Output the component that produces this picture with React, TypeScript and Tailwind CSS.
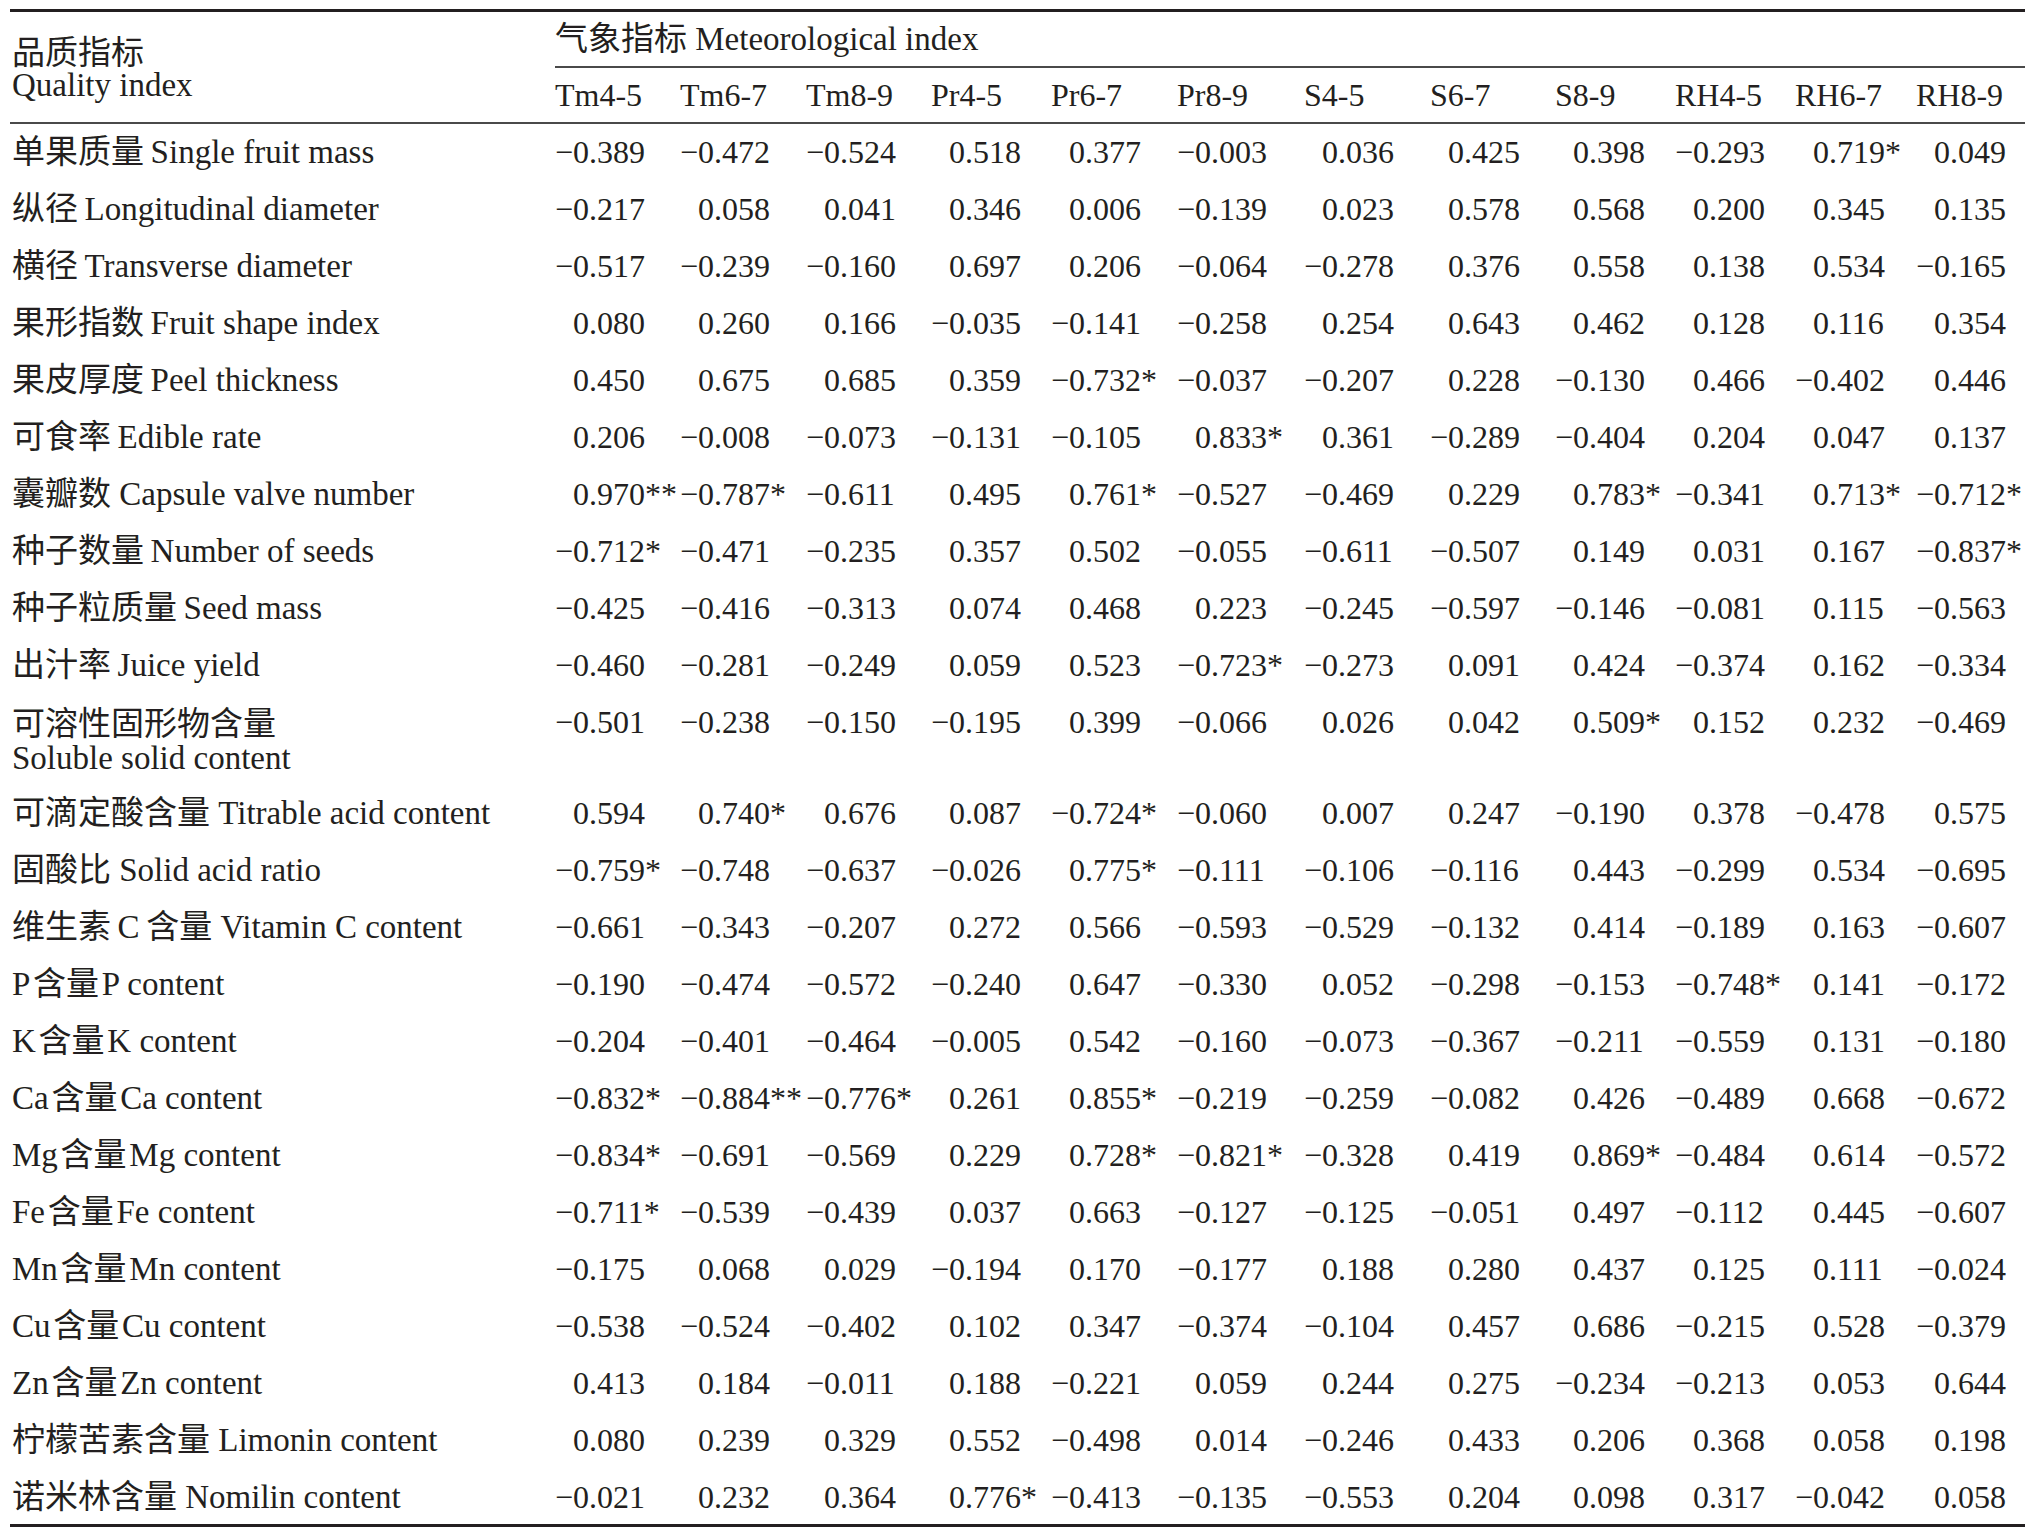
type Row = { label: string; label2?: string; values: string[] };

// Column widths follow the printed table: label column, then twelve index columns.
const cols = "grid-cols-[545px_125px_126px_125px_120px_126px_127px_126px_125px_120px_120px_121px_109px]";

const headers = [
  "Tm4-5", "Tm6-7", "Tm8-9", "Pr4-5", "Pr6-7", "Pr8-9",
  "S4-5", "S6-7", "S8-9", "RH4-5", "RH6-7", "RH8-9",
];

// \u2009 / \u200a = small gaps the typesetter leaves between Chinese and Latin text
const rows: Row[] = [
  { label: "单果质量\u2009Single fruit mass", values: ["-0.389", "-0.472", "-0.524", "0.518", "0.377", "-0.003", "0.036", "0.425", "0.398", "-0.293", "0.719*", "0.049"] },
  { label: "纵径\u2009Longitudinal diameter", values: ["-0.217", "0.058", "0.041", "0.346", "0.006", "-0.139", "0.023", "0.578", "0.568", "0.200", "0.345", "0.135"] },
  { label: "横径\u2009Transverse diameter", values: ["-0.517", "-0.239", "-0.160", "0.697", "0.206", "-0.064", "-0.278", "0.376", "0.558", "0.138", "0.534", "-0.165"] },
  { label: "果形指数\u2009Fruit shape index", values: ["0.080", "0.260", "0.166", "-0.035", "-0.141", "-0.258", "0.254", "0.643", "0.462", "0.128", "0.116", "0.354"] },
  { label: "果皮厚度\u2009Peel thickness", values: ["0.450", "0.675", "0.685", "0.359", "-0.732*", "-0.037", "-0.207", "0.228", "-0.130", "0.466", "-0.402", "0.446"] },
  { label: "可食率\u2009Edible rate", values: ["0.206", "-0.008", "-0.073", "-0.131", "-0.105", "0.833*", "0.361", "-0.289", "-0.404", "0.204", "0.047", "0.137"] },
  { label: "囊瓣数 Capsule valve number", values: ["0.970**", "-0.787*", "-0.611", "0.495", "0.761*", "-0.527", "-0.469", "0.229", "0.783*", "-0.341", "0.713*", "-0.712*"] },
  { label: "种子数量\u2009Number of seeds", values: ["-0.712*", "-0.471", "-0.235", "0.357", "0.502", "-0.055", "-0.611", "-0.507", "0.149", "0.031", "0.167", "-0.837*"] },
  { label: "种子粒质量\u2009Seed mass", values: ["-0.425", "-0.416", "-0.313", "0.074", "0.468", "0.223", "-0.245", "-0.597", "-0.146", "-0.081", "0.115", "-0.563"] },
  { label: "出汁率\u2009Juice yield", values: ["-0.460", "-0.281", "-0.249", "0.059", "0.523", "-0.723*", "-0.273", "0.091", "0.424", "-0.374", "0.162", "-0.334"] },
  { label: "可溶性固形物含量", label2: "Soluble solid content", values: ["-0.501", "-0.238", "-0.150", "-0.195", "0.399", "-0.066", "0.026", "0.042", "0.509*", "0.152", "0.232", "-0.469"] },
  { label: "可滴定酸含量 Titrable acid content", values: ["0.594", "0.740*", "0.676", "0.087", "-0.724*", "-0.060", "0.007", "0.247", "-0.190", "0.378", "-0.478", "0.575"] },
  { label: "固酸比 Solid acid ratio", values: ["-0.759*", "-0.748", "-0.637", "-0.026", "0.775*", "-0.111", "-0.106", "-0.116", "0.443", "-0.299", "0.534", "-0.695"] },
  { label: "维生素\u2009C\u2009含量 Vitamin C content", values: ["-0.661", "-0.343", "-0.207", "0.272", "0.566", "-0.593", "-0.529", "-0.132", "0.414", "-0.189", "0.163", "-0.607"] },
  { label: "P\u200a含量\u200aP content", values: ["-0.190", "-0.474", "-0.572", "-0.240", "0.647", "-0.330", "0.052", "-0.298", "-0.153", "-0.748*", "0.141", "-0.172"] },
  { label: "K\u200a含量\u200aK content", values: ["-0.204", "-0.401", "-0.464", "-0.005", "0.542", "-0.160", "-0.073", "-0.367", "-0.211", "-0.559", "0.131", "-0.180"] },
  { label: "Ca\u200a含量\u200aCa content", values: ["-0.832*", "-0.884**", "-0.776*", "0.261", "0.855*", "-0.219", "-0.259", "-0.082", "0.426", "-0.489", "0.668", "-0.672"] },
  { label: "Mg\u200a含量\u200aMg content", values: ["-0.834*", "-0.691", "-0.569", "0.229", "0.728*", "-0.821*", "-0.328", "0.419", "0.869*", "-0.484", "0.614", "-0.572"] },
  { label: "Fe\u200a含量\u200aFe content", values: ["-0.711*", "-0.539", "-0.439", "0.037", "0.663", "-0.127", "-0.125", "-0.051", "0.497", "-0.112", "0.445", "-0.607"] },
  { label: "Mn\u200a含量\u200aMn content", values: ["-0.175", "0.068", "0.029", "-0.194", "0.170", "-0.177", "0.188", "0.280", "0.437", "0.125", "0.111", "-0.024"] },
  { label: "Cu\u200a含量\u200aCu content", values: ["-0.538", "-0.524", "-0.402", "0.102", "0.347", "-0.374", "-0.104", "0.457", "0.686", "-0.215", "0.528", "-0.379"] },
  { label: "Zn\u200a含量\u200aZn content", values: ["0.413", "0.184", "-0.011", "0.188", "-0.221", "0.059", "0.244", "0.275", "-0.234", "-0.213", "0.053", "0.644"] },
  { label: "柠檬苦素含量 Limonin content", values: ["0.080", "0.239", "0.329", "0.552", "-0.498", "0.014", "-0.246", "0.433", "0.206", "0.368", "0.058", "0.198"] },
  { label: "诺米林含量 Nomilin content", values: ["-0.021", "0.232", "0.364", "0.776*", "-0.413", "-0.135", "-0.553", "0.204", "0.098", "0.317", "-0.042", "0.058"] },
];

// Minus sign hangs left of the digits, so positives get an invisible one.
function Num({ v }: { v: string }) {
  const neg = v.startsWith("-");
  return (
    <div className="whitespace-nowrap leading-[57px]">
      <span className={neg ? "" : "invisible"}>−</span>
      {neg ? v.slice(1) : v}
    </div>
  );
}

export default function App() {
  return (
    <div className="min-h-screen bg-white pl-[10px] pt-[9px] font-['Liberation_Serif','Noto_Sans_CJK_SC',serif] text-[32px] text-[#231f20]">
      <div className="w-[2015px] border-t-[3px] border-b-[3px] border-[#231f20]">
        {/* header */}
        <div className="flex border-b-2 border-[#4a4a4a]">
          <div className="w-[545px] shrink-0 pl-[2px] pt-[25px] text-[33px] leading-[32px]">
            <div>品质指标</div>
            <div>Quality index</div>
          </div>
          <div className="flex-1">
            <div className="h-[54px] whitespace-nowrap text-[33px] leading-[54px]">气象指标 Meteorological index</div>
            <div className="h-[2px] bg-[#4a4a4a]" />
            <div className="grid h-[54px] grid-cols-[125px_126px_125px_120px_126px_127px_126px_125px_120px_120px_121px_109px] leading-[54px]">
              {headers.map((h) => (
                <div key={h} className="whitespace-nowrap">{h}</div>
              ))}
            </div>
          </div>
        </div>

        {/* body */}
        {rows.map((r, idx) => (
          <div
            key={r.label}
            className={`grid ${cols} ${r.label2 ? "h-[91px]" : idx === rows.length - 1 ? "h-[55px]" : "h-[57px]"}`}
          >
            {r.label2 ? (
              <div className="whitespace-nowrap pl-[2px] pt-[13px] text-[33px] leading-[34px]">
                <div>{r.label}</div>
                <div>{r.label2}</div>
              </div>
            ) : (
              <div className="whitespace-nowrap pl-[2px] text-[33px] leading-[57px]">{r.label}</div>
            )}
            {r.values.map((v, i) => (
              <Num key={i} v={v} />
            ))}
          </div>
        ))}
      </div>
    </div>
  );
}
